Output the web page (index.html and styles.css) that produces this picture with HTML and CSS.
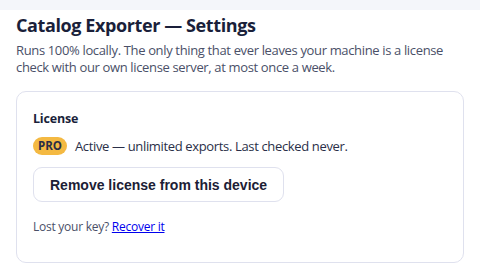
FILE: index.html
```html
<!DOCTYPE html>
<html lang="en">
<head>
  <meta charset="UTF-8">
  <meta name="viewport" content="width=device-width, initial-scale=1.0">
  <title>Catalog Exporter — Settings</title>
  <link rel="stylesheet" href="styles.css">
</head>
<body>

<div class="topbar"></div>
<main class="page">
  <h1>Catalog Exporter — Settings</h1>
  <p class="intro">Runs 100% locally. The only thing that ever leaves your machine is a license check with our own license server, at most once a week.</p>

  <section class="card">
    <h2>License</h2>
    <div class="status">
      <span class="badge">PRO</span>
      <span>Active — unlimited exports. Last checked never.</span>
    </div>
    <button class="btn">Remove license from this device</button>
    <p class="hint">Lost your key? <a href="#">Recover it</a></p>
  </section>
</main>

</body>
</html>
```

FILE: styles.css
```css
body {
  margin: 0;
  font-family: "Open Sans", sans-serif;
  background-color: #fff;
  color: #1c2238;
}
.topbar {
  height: 10px;
  background-color: #f4f6fa;
}
.page {
  padding: 0 16px;
}
h1 {
  margin: 0;
  padding-top: 2px;
  font-size: 18px;
  line-height: 26px;
  letter-spacing: -0.4px;
  font-weight: 700;
  color: #1a1f3a;
}
.intro {
  margin: 4px 0 0;
  font-size: 13px;
  line-height: 17px;
  letter-spacing: -0.35px;
  color: #4a5068;
}
.card {
  margin-top: 15px;
  border: 1px solid #dfe1ee;
  border-radius: 10px;
  padding: 18px 16px 12px;
}
h2 {
  margin: 0;
  font-size: 12.5px;
  line-height: 18px;
  letter-spacing: -0.2px;
  font-weight: 700;
  color: #1a1f3a;
}
.status {
  display: flex;
  align-items: center;
  gap: 8px;
  margin-top: 9px;
  font-size: 13px;
  letter-spacing: -0.35px;
  color: #2a2f48;
}
.badge {
  background-color: #f4b942;
  color: #2a2d45;
  font-size: 11.5px;
  font-weight: 700;
  letter-spacing: 0;
  line-height: 18px;
  padding: 0 5px;
  border-radius: 9px;
}
.btn {
  display: block;
  margin-top: 12px;
  height: 35px;
  padding: 0 16px;
  background: #fff;
  border: 1px solid #dfe1ee;
  border-radius: 9px;
  font-family: "Liberation Sans", Arial, sans-serif;
  font-size: 14px;
  font-weight: 700;
  color: #1c2035;
  cursor: pointer;
}
.hint {
  margin: 16px 0 15px;
  font-size: 12px;
  letter-spacing: -0.25px;
  color: #4a5068;
}
.hint a {
  color: #0000ee;
}
```
